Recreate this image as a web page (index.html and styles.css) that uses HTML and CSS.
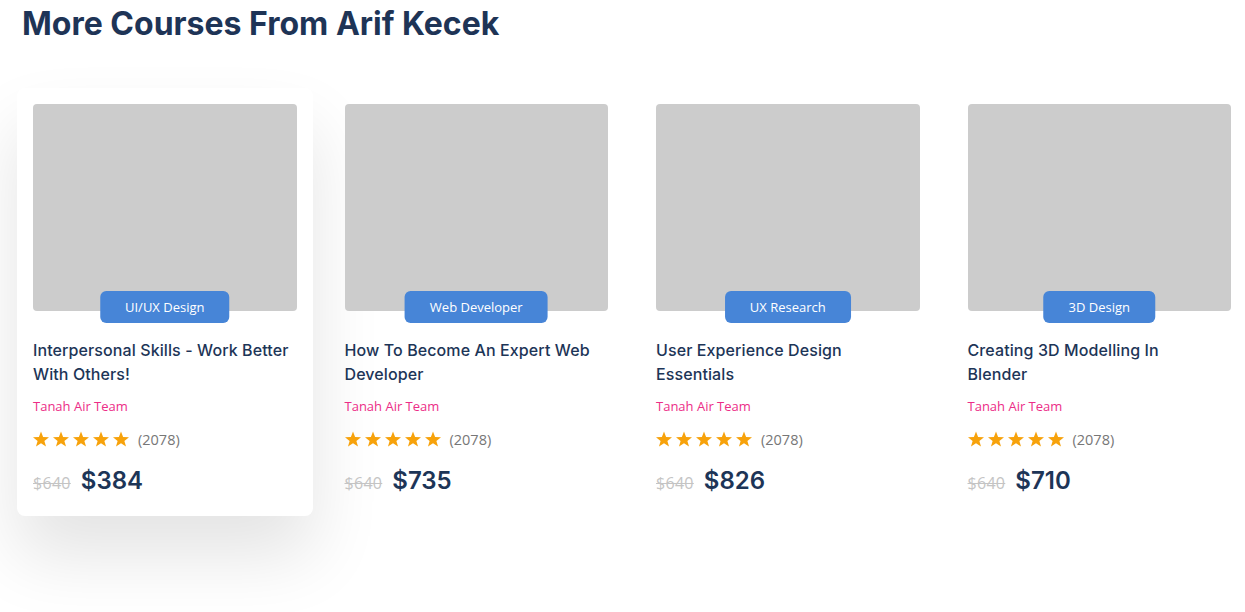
FILE: index.html
```html
<!DOCTYPE html>
<html lang="en">
<head>
<meta charset="utf-8">
<title>More Courses</title>
<link rel="stylesheet" href="styles.css">
</head>
<body>
<svg class="defs" width="0" height="0" aria-hidden="true"><defs><path id="st" d="M8 .4L10.1 6.1 16 6.2 11.4 9.9 13 15.6 8 12.3 3 15.6 4.6 9.9 0 6.2 5.9 6.1Z"/></defs></svg>
<section class="more">
  <h2 class="more-title">More Courses From Arif Kecek</h2>
  <div class="cards">
    <article class="card card-active">
      <div class="thumb"><span class="badge">UI/UX Design</span></div>
      <h3 class="course-title">Interpersonal Skills - Work Better<br>With Others!</h3>
      <p class="author">Tanah Air Team</p>
      <div class="rating">
        <svg class="stars" viewBox="0 0 96 16" width="96" height="16"><use href="#st" x="0"/><use href="#st" x="20"/><use href="#st" x="40"/><use href="#st" x="60"/><use href="#st" x="80"/></svg>
        <span class="count">(2078)</span>
      </div>
      <div class="price"><s class="old">$640</s><span class="new">$384</span></div>
    </article>
    <article class="card">
      <div class="thumb"><span class="badge">Web Developer</span></div>
      <h3 class="course-title">How To Become An Expert Web<br>Developer</h3>
      <p class="author">Tanah Air Team</p>
      <div class="rating">
        <svg class="stars" viewBox="0 0 96 16" width="96" height="16"><use href="#st" x="0"/><use href="#st" x="20"/><use href="#st" x="40"/><use href="#st" x="60"/><use href="#st" x="80"/></svg>
        <span class="count">(2078)</span>
      </div>
      <div class="price"><s class="old">$640</s><span class="new">$735</span></div>
    </article>
    <article class="card">
      <div class="thumb"><span class="badge">UX Research</span></div>
      <h3 class="course-title">User Experience Design<br>Essentials</h3>
      <p class="author">Tanah Air Team</p>
      <div class="rating">
        <svg class="stars" viewBox="0 0 96 16" width="96" height="16"><use href="#st" x="0"/><use href="#st" x="20"/><use href="#st" x="40"/><use href="#st" x="60"/><use href="#st" x="80"/></svg>
        <span class="count">(2078)</span>
      </div>
      <div class="price"><s class="old">$640</s><span class="new">$826</span></div>
    </article>
    <article class="card">
      <div class="thumb"><span class="badge">3D Design</span></div>
      <h3 class="course-title">Creating 3D Modelling In<br>Blender</h3>
      <p class="author">Tanah Air Team</p>
      <div class="rating">
        <svg class="stars" viewBox="0 0 96 16" width="96" height="16"><use href="#st" x="0"/><use href="#st" x="20"/><use href="#st" x="40"/><use href="#st" x="60"/><use href="#st" x="80"/></svg>
        <span class="count">(2078)</span>
      </div>
      <div class="price"><s class="old">$640</s><span class="new">$710</span></div>
    </article>
  </div>
</section>
</body>
</html>
```
FILE: styles.css
```css
* { box-sizing: border-box; }
html, body { margin: 0; padding: 0; background: #fff; }
body {
  font-family: "Inter", "Open Sans", sans-serif;
  color: #1d3557;
  min-height: 612px;
}
.defs { position: absolute; width: 0; height: 0; }

.more { padding: 4px 0 0 0; }
.more-title {
  margin: 0 0 0 22px;
  font-family: "Inter", sans-serif;
  font-size: 32px;
  line-height: 40px;
  font-weight: 700;
  color: #1e3456;
  letter-spacing: 0;
}

.cards {
  display: grid;
  grid-template-columns: repeat(4, 295.5px);
  column-gap: 16px;
  padding-left: 17px;
  margin-top: 44px;
}

.card {
  border-radius: 8px;
  padding: 16px 16px 18px;
}
.card-active {
  background: #fff;
  box-shadow: 0 40px 70px rgba(0, 0, 0, 0.11);
}

.thumb {
  position: relative;
  height: 207px;
  background: #cccccc;
  border-radius: 4px;
}
.badge {
  position: absolute;
  left: 50%;
  bottom: -12px;
  transform: translateX(-50%);
  height: 32px;
  padding: 0 25px;
  display: flex;
  align-items: center;
  background: #4785d7;
  color: #fff;
  border-radius: 6px;
  font-family: "Open Sans", sans-serif;
  font-size: 13px;
  font-weight: 500;
  white-space: nowrap;
}

.course-title {
  margin: 27px 0 0;
  font-size: 16px;
  line-height: 24px;
  font-weight: 500;
  letter-spacing: 0.1px;
  color: #1d3557;
}
.author {
  margin: 10px 0 0;
  font-family: "Open Sans", sans-serif;
  font-size: 13px;
  line-height: 20px;
  color: #ec2d87;
}
.rating {
  margin-top: 13px;
  display: flex;
  align-items: center;
  gap: 9px;
  height: 20px;
}
.stars { display: block; fill: #f7a20b; }
.count {
  font-family: "Open Sans", sans-serif;
  font-size: 14.5px;
  color: #777;
}
.price {
  margin-top: 17px;
  display: flex;
  align-items: baseline;
  gap: 10px;
  height: 32px;
}
.old {
  font-family: "Open Sans", sans-serif;
  font-size: 16px;
  letter-spacing: 0.3px;
  color: #c4c4c4;
}
.new {
  font-size: 24px;
  font-weight: 600;
  color: #1d3557;
}
```
